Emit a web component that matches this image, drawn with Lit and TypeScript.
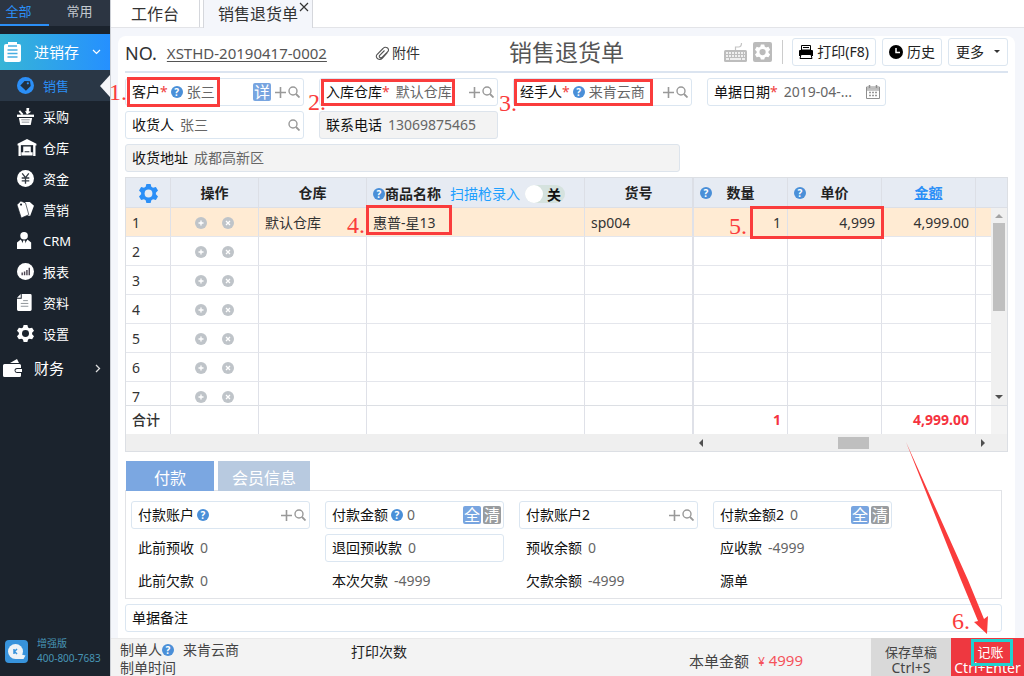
import { LitElement, html, svg, css, nothing, type TemplateResult } from "lit";
import { customElement, state } from "lit/decorators.js";
import { classMap } from "lit/directives/class-map.js";

const cog = (hole: string, fill = "currentColor") => svg`
  <path fill=${fill} d="M7 0h4l.7 2.6 1.6.9L16 2.800l2 3.400-2 2v1.600l2 2-2 3.400-2.700-.7-1.600.9L11 18H7l-.7-2.600-1.600-.9L2 15.200 0 11.800l2-2V8.200l-2-2 2-3.400 2.700.7 1.600-.9z"/>
  <circle cx="9" cy="9" r="3.700" fill=${hole}/>`;

const navIcons: Record<string, TemplateResult> = {
  sale: html`<svg class="ico" viewBox="0 0 18 18"><circle cx="9" cy="9" r="9" fill="#2b8ff7"/><path d="M3.500 9l4.500-4.800 5.800.3.700 5-5 5z" fill="#22303f"/><circle cx="11.500" cy="6.700" r="1.200" fill="#2b8ff7"/></svg>`,
  buy: html`<svg class="ico" viewBox="0 0 18 18"><path d="M0 7h18v2.500H0z" fill="#fff"/><path d="M2 10.500h14L14.500 18h-11z" fill="#fff"/><path d="M4.500 12.500h9M5 15h8" stroke="#8b9096" stroke-width="1"/><path d="M2.500 3l3.500 4" stroke="#fff" stroke-width="2"/><path d="M10 0h3l-.5 3.500 2.500.5-4.500 3-2-4 1.500.5z" fill="#fff"/></svg>`,
  store: html`<svg class="ico wide" viewBox="0 0 20 18"><path d="M10 0l10 5v2h-1v11H1V7H0V5z" fill="#fff"/><path d="M3.500 6.500h13V18h-13z" fill="#1b232d"/><path d="M6 8h8v6h2v3.500H4V14h2z" fill="#fff"/><path d="M7.500 13.500h5" stroke="#1b232d"/></svg>`,
  money: html`<svg class="ico" viewBox="0 0 18 18"><circle cx="9" cy="9" r="9" fill="#fff"/><path d="M5.500 3.500L9 8l3.500-4.500M5 8.500h8M5 11.500h8M9 8v6.500" stroke="#333a42" stroke-width="1.400" fill="none"/></svg>`,
  market: html`<svg class="ico" viewBox="0 0 18 18"><path d="M8.500 1l5 0 4.500 4-4 10.500-2.500 0z" fill="#fff"/><path d="M0 4l4-4 5 2 3.500 12.500-8 3.500z" fill="#fff" stroke="#1b232d" stroke-width=".7"/><circle cx="4.300" cy="3.800" r="1.100" fill="#1b232d"/></svg>`,
  crm: html`<svg class="ico" viewBox="0 0 18 18"><circle cx="7.500" cy="4" r="4" fill="#fff"/><path d="M0 18V11l4-3 3.500 6L11 8l4 3v7z" fill="#fff"/><path d="M6.500 9h2l.8 5-1.800 2-1.800-2z" fill="#fff"/></svg>`,
  report: html`<svg class="ico" viewBox="0 0 18 18"><circle cx="9" cy="9" r="9" fill="#fff"/><path d="M5.500 13v-3M8 13V9M10.500 13V7.500M13 13V5" stroke="#4b4350" stroke-width="1.500"/></svg>`,
  data: html`<svg class="ico" viewBox="0 0 18 18"><path d="M5 0h9a1.500 1.500 0 0 1 1.500 1.500v15A1.500 1.500 0 0 1 14 18H1.500A1.500 1.500 0 0 1 0 16.500V5h5z" fill="#fff"/><path d="M0 4l4-4v4z" fill="#fff"/><path d="M6.500 7h5M4 10h8M4 13h8" stroke="#8b9096"/></svg>`,
  setup: html`<svg class="ico" viewBox="0 0 18 18">${cog("#1b232d", "#fff")}</svg>`,
};

const plusIcon = html`<svg width="11" height="11" viewBox="0 0 11 11"><path d="M5.500 0v11M0 5.500h11" stroke="#999" stroke-width="1.600"/></svg>`;
const searchIcon = html`<svg width="12" height="12" viewBox="0 0 12 12" fill="none" stroke="#999"><circle cx="5" cy="5" r="4" stroke-width="1.400"/><path d="M8 8l3.500 3.500" stroke-width="1.800"/></svg>`;
const calendarIcon = html`<svg width="14" height="14" viewBox="0 0 14 14"><path d="M.5 2h13v11.500H.5zM.5 5h13" fill="none" stroke="#8f8f8f"/><path d="M1 2.500h12v2H1z" fill="#bbb"/><path d="M3.500 0v3M10.500 0v3" stroke="#8f8f8f" stroke-width="1.500"/><path d="M3 7.500h8M3 10.500h8" stroke="#999" stroke-width="1.600" stroke-dasharray="2 1"/></svg>`;
const help = html`<span class="help" role="img" aria-label="帮助">?</span>`;

type Action = "detail" | "plus" | "search" | "date" | "all" | "clear";

interface Field {
  id: string;
  label: string;
  value?: string;
  required?: boolean;
  help?: boolean;
  kind?: "box" | "locked" | "plain";
  actions?: Action[];
  mark?: { n: string; cls: string };
}

const actionView: Record<Action, TemplateResult> = {
  detail: html`<button class="sq">详</button>`,
  plus: html`<button class="act" aria-label="新增">${plusIcon}</button>`,
  search: html`<button class="act" aria-label="查找">${searchIcon}</button>`,
  date: html`<button class="act cal" aria-label="选择日期">${calendarIcon}</button>`,
  all: html`<button class="sq">全</button>`,
  clear: html`<button class="sq grey">清</button>`,
};

const headFields: Field[] = [
  { id: "customer", label: "客户", value: "张三", required: true, help: true, actions: ["detail", "plus", "search"], mark: { n: "1.", cls: "m1" } },
  { id: "warehouse", label: "入库仓库", value: "默认仓库", required: true, actions: ["plus", "search"], mark: { n: "2.", cls: "m2" } },
  { id: "handler", label: "经手人", value: "来肯云商", required: true, help: true, actions: ["plus", "search"], mark: { n: "3.", cls: "m3" } },
  { id: "date", label: "单据日期", value: "2019-04-...", required: true, actions: ["date"] },
  { id: "receiver", label: "收货人", value: "张三", actions: ["search"] },
  { id: "phone", label: "联系电话", value: "13069875465", kind: "locked" },
];

const payFields: Field[] = [
  { id: "acc1", label: "付款账户", help: true, actions: ["plus", "search"] },
  { id: "amt1", label: "付款金额", value: "0", help: true, actions: ["all", "clear"] },
  { id: "acc2", label: "付款账户2", actions: ["plus", "search"] },
  { id: "amt2", label: "付款金额2", value: "0", actions: ["all", "clear"] },
  { id: "prepaid", label: "此前预收", value: "0", kind: "plain" },
  { id: "refund", label: "退回预收款", value: "0" },
  { id: "prebal", label: "预收余额", value: "0", kind: "plain" },
  { id: "due", label: "应收款", value: "-4999", kind: "plain" },
  { id: "debt", label: "此前欠款", value: "0", kind: "plain" },
  { id: "thisdebt", label: "本次欠款", value: "-4999", kind: "plain" },
  { id: "debtbal", label: "欠款余额", value: "-4999", kind: "plain" },
  { id: "source", label: "源单", kind: "plain" },
];

@customElement("app-root")
export class AppRoot extends LitElement {
  @state() private scan = false;
  @state() private payTab = 0;

  static styles = css`
    :host { display: block; font: 14px/20px "Noto Sans", "Noto Sans CJK SC", sans-serif; color: #333; }
    *, *::before, *::after { box-sizing: border-box; }
    button, input { font: inherit; color: inherit; margin: 0; padding: 0; border: 0; background: none; }
    a { color: inherit; text-decoration: none; }
    svg { display: block; flex: none; }
    .shell { position: relative; display: flex; min-height: 100vh; overflow: hidden; }

    .side { width: 110px; flex: none; background: #1b232d; color: #fff; display: flex; flex-direction: column; font-size: 13px; }
    .modes { display: flex; height: 26px; margin-bottom: 8px; background: #2c3542; color: #c3c9d0; }
    .modes button { flex: 1; padding-bottom: 3px; border-bottom: 2px solid transparent; }
    .modes button:first-child { flex: none; width: 49px; padding-right: 12px; color: #2b8ff7; border-bottom-color: #2b8ff7; }
    .group { display: flex; align-items: center; height: 36px; padding: 0 9px 0 3px; font-size: 15px; gap: 12px; }
    .group span { flex: 1; }
    .group.open { background: linear-gradient(90deg, #37b5d6, #2590ff); }
    .group.shut { height: 38px; }
    .nav a { position: relative; display: flex; align-items: center; height: 31px; padding-left: 17px; }
    .nav .slot { width: 26px; }
    .ico { width: 17px; height: 17px; }
    .ico.wide { width: 20px; }
    .nav a.on { background: #2a3746; color: #2b8ff7; }
    .nav a.on::after { content: ""; position: absolute; right: 0; top: 5px; border: 11px solid transparent; border-left: 0; border-right: 10px solid #f5f6fa; }
    .brand { margin-top: auto; display: flex; align-items: center; gap: 9px; padding: 0 0 10px 5px; font-size: 10px; line-height: 15px; color: #4795b5; }

    .main { flex: 1; min-width: 0; display: flex; flex-direction: column; background: #f4f6fb; border-left: 1px solid #cdd0d6; }
    .tabs { display: flex; gap: 3px; height: 28px; background: #fff; font-size: 16px; border-bottom: 1px solid #e3e4e8; }
    .tabs .tab { display: flex; align-items: center; padding: 0 20px; border-right: 1px solid #d5d7dc; }
    .tabs .on { position: relative; padding: 0 14px; margin-bottom: -1px; background: #f4f6fb; border-left: 1px solid #d5d7dc; }
    .close { position: absolute; right: 3px; top: 2px; }

    .card { flex: 1; margin: 8px 9px 0 7px; padding: 0 7px 6px; background: #fff; border-radius: 8px 8px 0 0; }
    .top { display: grid; grid-template-columns: 1fr auto 1fr; align-items: center; height: 37px; padding-bottom: 4px; border-bottom: 2px solid #dbe4f0; }
    .no { display: flex; align-items: center; font-size: 18px; padding-top: 3px; }
    .no .code { font-size: 15px; margin-left: 10px; color: #555; text-decoration: underline; text-underline-offset: 2px; }
    .attach { display: flex; align-items: center; gap: 2px; margin-left: 48px; font-size: 14px; }
    h1 { margin: 0; font-size: 23px; line-height: 30px; font-weight: 400; color: #555; }
    .tools { display: flex; align-items: center; justify-content: flex-end; }
    .tools .rule { width: 1px; height: 24px; margin: 0 9px; background: #ccc; }
    .btn { display: flex; align-items: center; justify-content: center; gap: 4px; height: 28px; padding: 0 6px; margin-right: 6px; border: 1px solid #dce6f0; border-radius: 3px; color: #222; white-space: nowrap; }
    .btn:last-child { margin: 0; gap: 10px; padding: 0 7px; }

    .form { display: grid; grid-template-columns: repeat(4, minmax(0, 179px)); gap: 5px 15px; padding-top: 5px; }
    .field { position: relative; display: flex; align-items: center; height: 28px; padding: 0 2px 0 6px; border: 1px solid #dbe6f1; border-radius: 3px; color: #111; white-space: nowrap; }
    .field.locked { background: #f3f3f3; border-color: #dde4ec; }
    .field.plain { border-color: transparent; }
    .field input, .field output { flex: 1; width: 0; min-width: 0; margin-left: 6px; color: #666; }
    .field .help { margin-left: 3px; }
    .field .help + input { margin-left: 4px; }
    .star { color: #f04040; }
    .address { max-width: 555px; margin: 5px 0; }
    .help { display: inline-grid; place-items: center; flex: none; width: 12px; height: 12px; border-radius: 6px; background: #4a8fd8; color: #fff; font: bold 10px/12px "Noto Sans", sans-serif; }
    .act { display: grid; place-items: center; flex: none; width: 14px; height: 20px; }
    .act.cal { width: 20px; }
    .sq { flex: none; width: 18px; height: 18px; margin-right: 2px; border-radius: 2px; background: #78a5e0; color: #fff; line-height: 18px; font-size: 16px; }
    .sq.grey { background: #999c9f; margin: 0; }

    .mark { position: absolute; border: 3px solid #fa3c3c; pointer-events: none; z-index: 2; }
    .mark i { position: absolute; font: 24px/24px "Liberation Serif", serif; color: #fa3c3c; }
    .m1 { left: 1px; top: -2px; width: 93px; height: 30px; } .m1 i { left: -21px; top: 0; }
    .m2 { left: 1px; top: 0; width: 134px; height: 27px; } .m2 i { left: -16px; top: 8px; }
    .m3 { left: 0; top: 0; width: 139px; height: 27px; } .m3 i { left: -18px; top: 9px; }
    .m4 { left: 240px; top: 27px; width: 86px; height: 30px; } .m4 i { left: -22px; top: 5px; }
    .m5 { right: 123px; top: 28px; width: 134px; height: 33px; } .m5 i { left: -24px; top: 5px; }
    .m6 { position: absolute; right: 54px; bottom: 43px; font: 24px/24px "Liberation Serif", serif; color: #fa3c3c; }
    .arrow { position: absolute; right: 32px; bottom: 38px; pointer-events: none; z-index: 3; }

    .grid { position: relative; border: 1px solid #dcdfe4; }
    table { width: 100%; table-layout: fixed; border-collapse: separate; border-spacing: 0; }
    .c1 { width: 45px; } .c2 { width: 88px; } .c3 { width: 108px; } .c5 { width: 109px; }
    .c6 { width: 94px; } .c7, .c8 { width: 94px; } .end { width: 31px; } .endb { width: 15px; }
    th, td { height: 29px; padding: 1px 6px 0; border-right: 1px solid #dfe1e8; border-bottom: 1px solid #e4e6ec; text-align: left; font-weight: 400; white-space: nowrap; }
    th:nth-child(5), td:nth-child(5) { border-right-width: 2px; }
    th:last-child, td:last-child { border-right: 0; }
    thead th { height: 30px; background: #e6ebf3; text-align: center; font-weight: 700; color: #222; border-color: #dcdfe6; }
    thead .name { padding: 2px 4px 0 6px; }
    .thl { display: flex; align-items: center; }
    .thq { display: grid; grid-template-columns: 12px 1fr 12px; align-items: center; }
    thead a { color: #2b8ff7; text-decoration: underline; }
    .setup { display: block; margin: auto; width: 19px; color: #2b8ff7; }
    .scan { display: flex; align-items: center; margin-left: 9px; font-weight: 400; color: #1e9fff; }
    .toggle { position: relative; display: flex; margin-left: 5px; }
    .toggle input { appearance: none; width: 40px; height: 18px; border-radius: 9px; background: #d5e2de; }
    .toggle input::before { content: ""; display: block; width: 18px; height: 18px; border-radius: 9px; background: #fff; }
    .toggle input:checked::before { margin-left: 22px; }
    .toggle span { position: absolute; left: 22px; top: 0; color: #111; font-weight: 700; pointer-events: none; }
    .rows { display: flex; height: 197px; overflow: hidden; }
    .rows table { flex: 1; width: 0; align-self: flex-start; }
    .rows tr:first-child > * { background: #ffebd3; }
    .num { text-align: right; }
    .ops { display: flex; justify-content: center; gap: 15px; }
    .ops svg { width: 12px; height: 12px; }
    .vbar { width: 16px; background: #f0f0f0; display: flex; flex-direction: column; align-items: center; justify-content: space-between; padding: 6px 0; }
    .vbar .thumb { width: 12px; height: 88px; margin: 5px 0 auto; background: #bfbfbf; }
    .foot th, .foot td { border-bottom: 0; border-top: 1px solid #dcdfe4; font-weight: 700; padding-top: 0; }
    .foot td { color: #f5333f; }
    .foot th { font-weight: 500; }
    .foot tr > :last-child { background: linear-gradient(90deg, #fff 15px, #f3f3f3 15px); }
    .hbar { display: flex; align-items: center; height: 17px; padding: 0 22px 0 65%; background: #efefef; }
    .hbar .thumb { width: 31px; height: 12px; margin: 0 112px 0 auto; background: #bfbfbf; }

    .paytabs { display: flex; gap: 4px; margin: 9px 1px 0; }
    .paytabs button { width: 88px; height: 30px; background: #b8cae0; color: #fff; font-size: 16px; padding-top: 3px; }
    .paytabs button + button { width: 92px; }
    .paytabs .on { background: #7ba7e1; }
    .panel { margin: -1px 6px 0 0; padding: 10px 5px 3px; border: 1px solid #e1e3e7; }
    .panel .form { padding: 0; }
    .memo { margin: 5px 6px 0 0; }

    .status { display: flex; height: 38px; background: #f3f3f3; border-top: 1px solid #e9e9ea; color: #444; }
    .status .who { width: 240px; padding: 2px 0 0 9px; line-height: 18px; }
    .status .who div { display: flex; align-items: center; }
    .status .who b { font-weight: 400; margin-left: 9px; }
    .status .prints { flex: 1; padding-top: 3px; color: #222; }
    .status .sum { display: flex; align-items: center; gap: 9px; margin-right: 68px; padding-top: 6px; font-size: 15px; }
    .status .sum b { color: #f5535b; font-weight: 400; }
    .status .sum small { font-size: 12px; }
    .cmd { position: relative; width: 80px; margin-top: -1px; padding-top: 6px; background: #d9d9d9; line-height: 15px; white-space: nowrap; }
    .cmd span { display: block; font-size: 13px; }
    .cmd.go { width: 73px; background: #ee3840; color: #fff; display: flex; flex-direction: column; align-items: center; justify-content: center; }
    .cmd.go span { padding-left: 6px; }
    .cmd.go::after { content: ""; position: absolute; left: 20px; top: 1px; width: 42px; height: 27px; border: 3px solid #1fd2d0; }
  `;

  private field(f: Field) {
    const kind = f.kind ?? "box";
    return html`<div class=${classMap({ field: true, [kind]: true })}>
      <label for=${f.id}>${f.label}${f.required ? html`<span class="star">*</span>` : nothing}</label>
      ${f.help ? help : nothing}
      ${kind === "plain"
        ? html`<output id=${f.id}>${f.value ?? ""}</output>`
        : html`<input id=${f.id} .value=${f.value ?? ""} ?readonly=${kind === "locked"} />`}
      ${(f.actions ?? []).map((a) => actionView[a])}
      ${f.mark ? html`<div class="mark ${f.mark.cls}"><i>${f.mark.n}</i></div>` : nothing}
    </div>`;
  }

  private cols(end: string) {
    return html`<colgroup>
      <col class="c1" /><col class="c2" /><col class="c3" /><col /><col class="c5" />
      <col class="c6" /><col class="c7" /><col class="c8" /><col class=${end} />
    </colgroup>`;
  }

  private row(n: number) {
    const first = n === 1;
    return html`<tr>
      <th scope="row">${n}</th>
      <td><div class="ops">
        <button aria-label="增加行"><svg viewBox="0 0 12 12"><circle cx="6" cy="6" r="6" fill="#bfc4c9"/><path d="M6 3.500v5M3.500 6h5" stroke="#fff" stroke-width="1.300"/></svg></button>
        <button aria-label="删除行"><svg viewBox="0 0 12 12"><circle cx="6" cy="6" r="6" fill="#bfc4c9"/><path d="M4 4l4 4M8 4l-4 4" stroke="#fff" stroke-width="1.300"/></svg></button>
      </div></td>
      <td>${first ? "默认仓库" : ""}</td>
      <td>${first ? "惠普-星13" : ""}</td>
      <td>${first ? "sp004" : ""}</td>
      <td class="num">${first ? "1" : ""}</td>
      <td class="num">${first ? "4,999" : ""}</td>
      <td class="num">${first ? "4,999.00" : ""}</td>
      <td></td>
    </tr>`;
  }

  private sidebar() {
    const items: [string, string][] = [
      ["sale", "销售"], ["buy", "采购"], ["store", "仓库"], ["money", "资金"], ["market", "营销"],
      ["crm", "CRM"], ["report", "报表"], ["data", "资料"], ["setup", "设置"],
    ];
    return html`<aside class="side">
      <div class="modes"><button>全部</button><button>常用</button></div>
      <a class="group open" href="#">
        <svg width="19" height="20" viewBox="0 0 19 20"><rect x="1" y="2" width="17" height="18" rx="2" fill="#fff"/><path d="M5 0h9v4H5z" fill="#fff"/><path d="M5 4h9M4.500 8h10M4.500 11.500h10M4.500 15h10" stroke="#48aee2" stroke-width="1.300"/></svg>
        <span>进销存</span>
        <svg width="9" height="6" viewBox="0 0 9 6"><path d="M1 1l3.500 3.500L8 1" fill="none" stroke="#fff" stroke-width="1.200"/></svg>
      </a>
      <nav class="nav">${items.map(([k, t]) => html`<a href="#" class=${classMap({ on: k === "sale" })}><span class="slot">${navIcons[k]}</span>${t}</a>`)}</nav>
      <a class="group shut" href="#">
        <svg width="19" height="18" viewBox="0 0 19 18"><path d="M1.500 5h15A1.500 1.500 0 0 1 18 6.500V9h-4a2.500 2.500 0 0 0 0 5h4v2.500a1.500 1.500 0 0 1-1.500 1.500h-15A1.500 1.500 0 0 1 0 16.500v-10A1.500 1.500 0 0 1 1.500 5z" fill="#fff"/><path d="M7 4l7-4 2 4z" fill="#fff"/><path d="M14 10h5v3h-5a1.500 1.500 0 0 1 0-3z" fill="#fff"/></svg>
        <span>财务</span>
        <svg width="6" height="9" viewBox="0 0 6 9"><path d="M1 1l3.500 3.500L1 8" fill="none" stroke="#ddd" stroke-width="1.300"/></svg>
      </a>
      <div class="brand">
        <svg width="23" height="23" viewBox="0 0 23 23"><rect width="23" height="23" rx="4" fill="#3793dc"/><circle cx="10.500" cy="11.500" r="7.500" fill="#eef3f7"/><path d="M10 19h8.500l2-3.500-4-1z" fill="#eef3f7"/><path d="M9 9v5M12 9l-2.500 2.500 2.500 2.500" fill="none" stroke="#3793dc" stroke-width="1.500"/></svg>
        <div>增强版<br />400-800-7683</div>
      </div>
    </aside>`;
  }

  private sheet() {
    return html`<section class="grid">
      <table>
        ${this.cols("end")}
        <thead><tr>
          <th><button class="setup" aria-label="列设置"><svg width="19" height="19" viewBox="0 0 18 18">${cog("#e6ebf3")}</svg></button></th>
          <th>操作</th><th>仓库</th>
          <th class="name"><div class="thl">${help}<span>商品名称</span>
            <label class="scan">扫描枪录入<span class="toggle">
              <input type="checkbox" .checked=${this.scan} @change=${() => (this.scan = !this.scan)} /><span>${this.scan ? "" : "关"}</span>
            </span></label></div></th>
          <th>货号</th>
          <th><div class="thq">${help}<span>数量</span></div></th>
          <th><div class="thq">${help}<span>单价</span></div></th>
          <th><a href="#">金额</a></th><th></th>
        </tr></thead>
      </table>
      <div class="rows">
        <table>${this.cols("endb")}<tbody>${[1, 2, 3, 4, 5, 6, 7].map((n) => this.row(n))}</tbody></table>
        <div class="vbar">
          <svg width="8" height="4" viewBox="0 0 8 4"><path d="M4 0l4 4H0z" fill="#a3a3a3"/></svg>
          <div class="thumb"></div>
          <svg width="8" height="4" viewBox="0 0 8 4"><path d="M0 0h8L4 4z" fill="#505050"/></svg>
        </div>
      </div>
      <table class="foot">${this.cols("end")}<tbody><tr>
        <th scope="row">合计</th><td></td><td></td><td></td><td></td>
        <td class="num">1</td><td></td><td class="num">4,999.00</td><td></td>
      </tr></tbody></table>
      <div class="hbar">
        <svg width="4" height="8" viewBox="0 0 4 8"><path d="M4 0v8L0 4z" fill="#505050"/></svg>
        <div class="thumb"></div>
        <svg width="4" height="8" viewBox="0 0 4 8"><path d="M0 0l4 4-4 4z" fill="#505050"/></svg>
      </div>
      <div class="mark m4"><i>4.</i></div>
      <div class="mark m5"><i>5.</i></div>
    </section>`;
  }

  render() {
    return html`<div class="shell">
      ${this.sidebar()}
      <main class="main">
        <div class="tabs">
          <a class="tab" href="#">工作台</a>
          <a class="tab on" href="#">销售退货单<svg class="close" width="10" height="10" viewBox="0 0 10 10"><path d="M1 1l8 8M9 1L1 9" stroke="#333" stroke-width="1.200"/></svg></a>
        </div>
        <div class="card">
          <header class="top">
            <div class="no">NO. <a class="code" href="#">XSTHD-20190417-0002</a>
              <a class="attach" href="#"><svg width="15" height="15" viewBox="0 0 15 15"><path d="M12.500 6.500l-5 5.500c-3 3-8 0-5.500-3.500L8 2.500c2.500-2.800 7 0 5 3L7.500 11C6 12.500 3.500 11.500 4.500 9.500L9.500 4.500" fill="none" stroke="#555" stroke-width="1.100"/></svg>附件</a>
            </div>
            <h1>销售退货单</h1>
            <div class="tools">
              <svg width="23" height="20" viewBox="0 0 23 20"><rect y="8" width="23" height="12" rx="1.500" fill="#bdbdbd"/><path d="M11.500 8V5h3q3 0 3-4" fill="none" stroke="#c4c4c4" stroke-width="1.200"/><path d="M2 11h19M2 14h19" stroke="#fff" stroke-width="1.400" stroke-dasharray="2 1"/><path d="M2 17h3M6 17h11M18 17h3" stroke="#fff" stroke-width="1.400"/></svg>
              <svg width="26" height="20" viewBox="-6 0 26 20"><rect width="19" height="20" rx="2" fill="#bbb"/><g transform="translate(2 2.500) scale(.84)">${cog("#bbb", "#fff")}</g></svg>
              <span class="rule"></span>
              <button class="btn"><svg width="14" height="14" viewBox="0 0 14 14"><path d="M2.500.5h9V5h-9z" fill="#fff" stroke="#000"/><path d="M4 2.500h6" stroke="#000"/><path d="M1 5h12a1 1 0 0 1 1 1v5H0V6a1 1 0 0 1 1-1z" fill="#000"/><path d="M2 9.500h10l1 4H1z" fill="#fff" stroke="#000"/></svg>打印(F8)</button>
              <button class="btn"><svg width="14" height="14" viewBox="0 0 14 14"><circle cx="7" cy="7" r="7"/><path d="M7 3v4.500h4" fill="none" stroke="#fff" stroke-width="1.500"/></svg>历史</button>
              <button class="btn">更多<svg width="6" height="3" viewBox="0 0 6 3"><path d="M0 0h6L3 3z" fill="#333"/></svg></button>
            </div>
          </header>
          <div class="form">${headFields.map((f) => this.field(f))}</div>
          <div class="address">${this.field({ id: "address", label: "收货地址", value: "成都高新区", kind: "locked" })}</div>
          ${this.sheet()}
          <div class="paytabs">${["付款", "会员信息"].map((t, i) => html`<button class=${classMap({ on: i === this.payTab })} @click=${() => (this.payTab = i)}>${t}</button>`)}</div>
          <div class="panel"><div class="form">${payFields.map((f) => this.field(f))}</div></div>
          <div class="memo">${this.field({ id: "memo", label: "单据备注" })}</div>
        </div>
        <footer class="status">
          <div class="who"><div>制单人${help}<b>来肯云商</b></div><div>制单时间</div></div>
          <div class="prints">打印次数</div>
          <div class="sum">本单金额 <b><small>¥</small> 4999</b></div>
          <button class="cmd"><span>保存草稿</span>Ctrl+S</button>
          <button class="cmd go"><span>记账</span>Ctrl+Enter</button>
        </footer>
      </main>
      <span class="m6">6.</span>
      <svg class="arrow" width="90" height="200" viewBox="902 438 90 200"><path d="M906 442L968 580 984 619 988 616 987 634 974 622 978 621 961 580z" fill="#fa3c3c"/></svg>
    </div>`;
  }
}
